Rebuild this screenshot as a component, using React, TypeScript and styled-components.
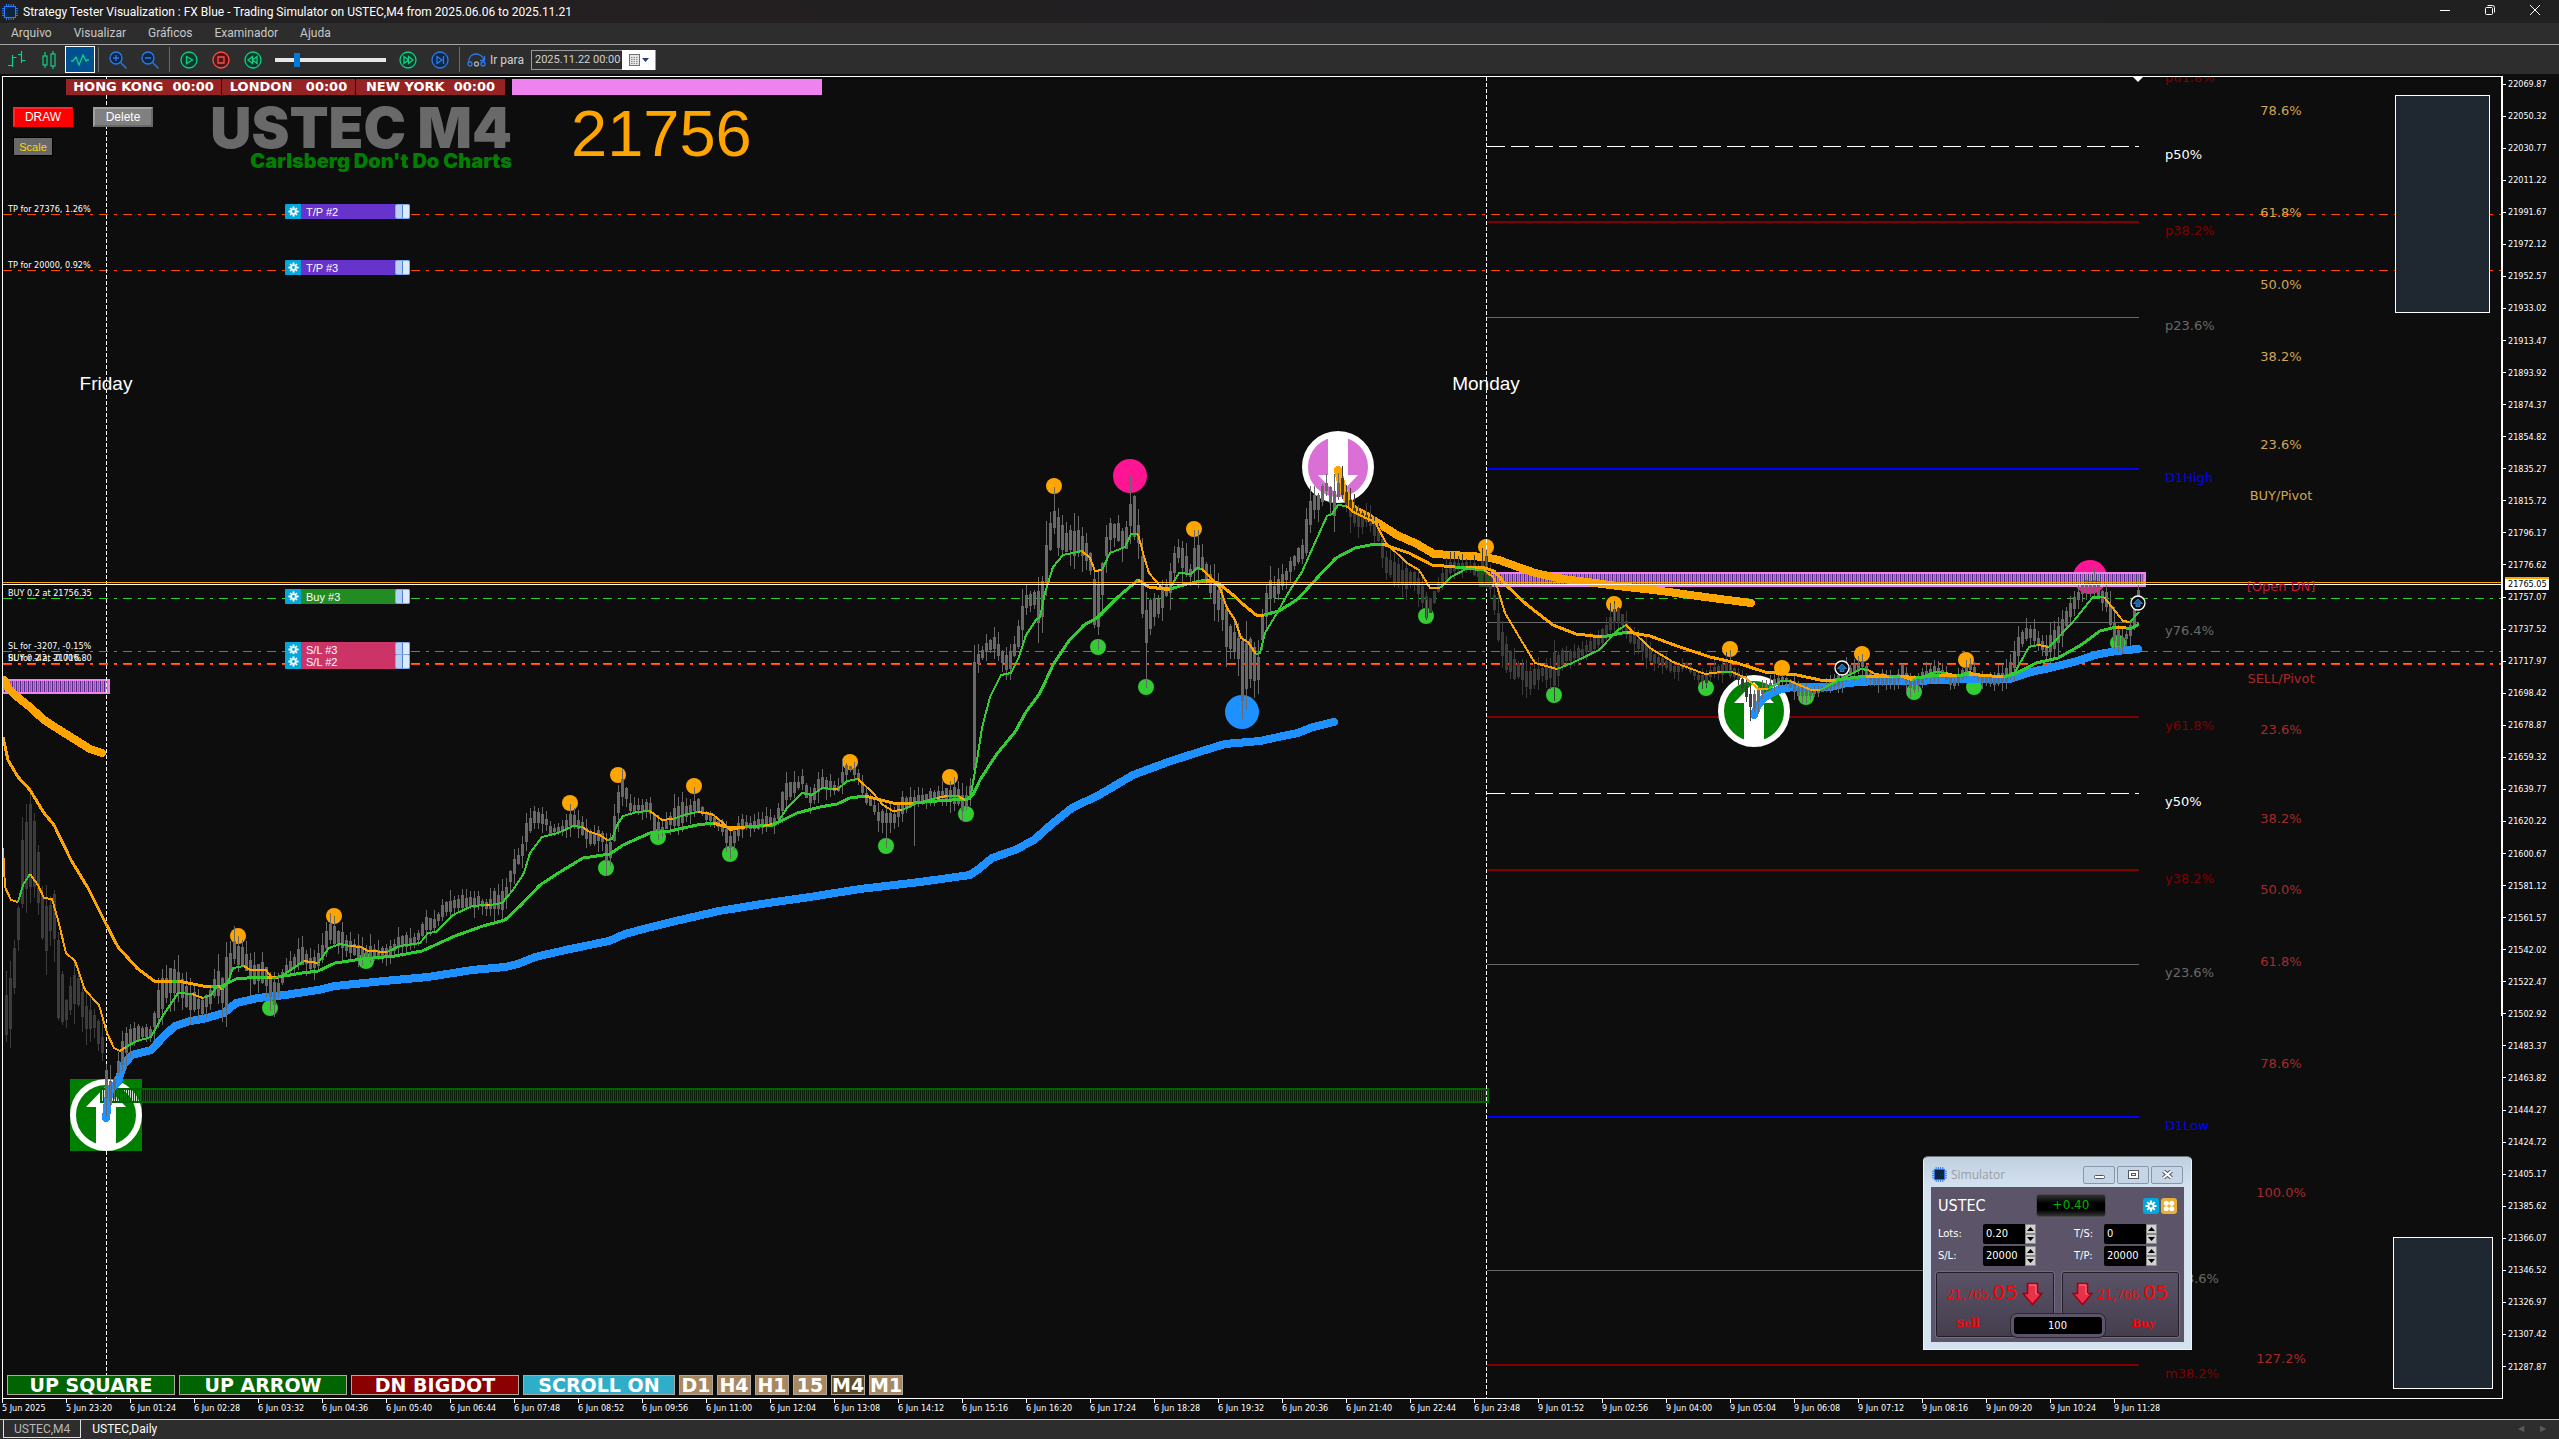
import React from "react";
import styled, { createGlobalStyle, css } from "styled-components";

const OX = 3;
const OY = 77;

const UI = `Roboto, "Open Sans", sans-serif`;
const CHART = `"DejaVu Sans Condensed", "DejaVu Sans", sans-serif`;
const WIDE = `"DejaVu Sans", sans-serif`;
const HEAVY = `Inter, "DejaVu Sans", sans-serif`;
const ARIAL = `"Liberation Sans", Arial, sans-serif`;

const GlobalStyle = createGlobalStyle`
  * { box-sizing: border-box; }
  html, body { margin: 0; background: #0d0d0d; }
  button, input { margin: 0; padding: 0; font: inherit; color: inherit; }
`;

const Shell = styled.div`
  display: flex;
  flex-direction: column;
  height: 100vh;
  overflow: hidden;
  font-family: ${UI};
  font-size: 12px;
  color: #fff;
  background: #0d0d0d;
`;

/* ---------- window frame ---------- */

const TitleBar = styled.header`
  display: flex;
  align-items: center;
  gap: 5px;
  height: 23px;
  padding: 0 12px 0 2px;
  background: linear-gradient(90deg, #202020, #241f20 20%, #201f22 60%, #202020);
`;

const Title = styled.h1`
  flex: 1;
  margin: 0;
  font-size: 12px;
  font-weight: 400;
  line-height: 20px;
`;

const WindowButtons = styled.div`
  display: flex;
  gap: 21px;
  padding-bottom: 3px;
`;

const WindowButton = styled.button`
  display: grid;
  place-items: center;
  width: 24px;
  height: 20px;
  border: 0;
  background: none;
`;

const MenuBar = styled.nav`
  display: flex;
  align-items: center;
  gap: 22px;
  height: 22px;
  padding: 0 11px 2px;
  background: #2d2d2d;
  border-bottom: 1px solid #a5a5a5;
`;

const MenuLink = styled.a`
  color: #c8c8c8;
  text-decoration: none;
  line-height: 16px;
`;

const Toolbar = styled.div`
  display: flex;
  align-items: center;
  height: 29px;
  padding-left: 1px;
  background: #2d2d2d;
`;

const ToolButton = styled.button<{ $active?: boolean }>`
  display: grid;
  place-items: center;
  width: ${(p) => (p.$active ? 30 : 32)}px;
  height: 27px;
  border: ${(p) => (p.$active ? "1px solid #fff" : "0")};
  background: ${(p) => (p.$active ? "#00508f" : "none")};
`;

const Divider = styled.span`
  width: 1px;
  height: 25px;
  margin: 0 3px;
  background: #6a6a6a;
`;

const Speed = styled.input`
  appearance: none;
  width: 111px;
  height: 14px;
  margin: 0 6px;
  background: linear-gradient(#e7e7e7, #e7e7e7) center / 100% 4px no-repeat;
  &::-webkit-slider-thumb {
    appearance: none;
    width: 6px;
    height: 14px;
    background: #0078d7;
  }
`;

const GoTo = styled.label`
  display: flex;
  align-items: center;
  gap: 4px;
  width: 64px;
  padding-left: 4px;
  color: #d0d0d0;
`;

const DateBox = styled.div`
  display: flex;
  align-items: center;
  height: 20px;
  margin-left: 4px;
  border: 1px solid #9a9a9a;
  background: #2d2d2d;
`;

const DateInput = styled.input`
  width: 90px;
  padding-left: 3px;
  border: 0;
  outline: 0;
  background: none;
  color: #d0d0d0;
  font-size: 11px;
`;

const DateButton = styled.button`
  display: flex;
  align-items: center;
  gap: 2px;
  width: 33px;
  height: 20px;
  padding-left: 7px;
  border: 0;
  background: #fff;
`;

/* ---------- chart frame ---------- */

const ChartArea = styled.main`
  flex: 1;
  min-height: 0;
  display: grid;
  grid-template-columns: 1fr 56px;
  grid-template-rows: 1fr 20px;
  padding: 2px 0 0 2px;
`;

const Plot = styled.section`
  position: relative;
  overflow: hidden;
  border: 1px solid #fff;
`;

const Drawing = styled.svg`
  position: absolute;
  inset: 0;
  width: 100%;
  height: 100%;
`;

const PriceAxis = styled.div`
  position: relative;
  display: flex;
  flex-direction: column;
  justify-content: space-between;
  padding: 1px 0 25px;
`;

const Price = styled.span`
  display: flex;
  align-items: center;
  height: 14px;
  font: 9px / 14px ${CHART};
  &::before {
    content: "";
    width: 3px;
    height: 1px;
    margin-right: 2px;
    background: #fff;
  }
`;

const CurrentPrice = styled.div`
  position: absolute;
  left: 2px;
  top: 501px;
  height: 13px;
  width: 44px;
  padding-left: 3px;
  font: 9px / 11px ${CHART};
  color: #000;
  background: #fff;
  border-top: 2px solid #ffa500;
`;

const TimeAxis = styled.div`
  display: flex;
  overflow: hidden;
`;

const Time = styled.span`
  flex: 0 0 64px;
  height: 20px;
  padding-top: 4px;
  font: 9px / 10px ${CHART};
  white-space: nowrap;
  background: linear-gradient(#fff, #fff) 0 0 / 1px 4px no-repeat;
`;

const TabBar = styled.footer`
  display: flex;
  align-items: flex-start;
  height: 20px;
  padding: 0 12px 0 3px;
  background: #2d2d2d;
  border-top: 1px solid #c8c8c8;
`;

const Tab = styled.button<{ $current?: boolean }>`
  height: 18px;
  padding: 0 10px;
  border: ${(p) => (p.$current ? "1px solid #e0e0e0" : "1px solid transparent")};
  border-top: 0;
  background: none;
  color: ${(p) => (p.$current ? "#b8b8b8" : "#fff")};
  font-size: 12px;
  line-height: 18px;
`;

const TabArrows = styled.div`
  display: flex;
  gap: 14px;
  margin: 3px 0 0 auto;
  color: #5a5a5a;
`;

const ArrowButton = styled.button`
  width: 8px;
  border: 0;
  background: none;
  font: 8px / 12px ${WIDE};
`;

/* ---------- chart objects, pinned to the canvas ---------- */

type At = { $x: number; $y: number };
const pinned = css<At>`
  position: absolute;
  left: ${(p) => p.$x - OX}px;
  top: ${(p) => p.$y - OY}px;
`;

const Group = styled.div<At & { $gap?: number }>`
  ${pinned}
  display: flex;
  gap: ${(p) => p.$gap ?? 0}px;
`;

const Clock = styled.span<{ $w: number }>`
  width: ${(p) => p.$w}px;
  height: 16px;
  background: #962323;
  font: bold 13px / 16px ${WIDE};
  text-align: center;
  white-space: pre;
`;

const NewsBar = styled.span`
  width: 310px;
  height: 16px;
  margin-left: 6px;
  background: #ee82ee;
`;

const ChartButton = styled.button<{ $tone: "red" | "gray" }>`
  width: 60px;
  height: 20px;
  border: 2px solid;
  border-color: ${(p) => (p.$tone === "red" ? "#ff2828 #f00 #f00 #ff2828" : "#a0a0a0 #696969 #696969 #a0a0a0")};
  background: ${(p) => (p.$tone === "red" ? "#ff0000" : "#808080")};
  font: 12px / 16px ${ARIAL};
`;

const ScaleButton = styled.button<At>`
  ${pinned}
  width: 40px;
  height: 19px;
  border: 1px solid #000;
  background: #696969;
  color: #ffd700;
  font: 11px / 18px ${ARIAL};
`;

const Heading = styled.div<At>`
  ${pinned}
  width: 310px;
  text-align: right;
  white-space: nowrap;
  font-family: ${HEAVY};
  font-weight: 900;
`;

const Symbol = styled.div`
  color: #696969;
  font-size: 57px;
  line-height: 46px;
`;

const Motto = styled.div`
  color: #008000;
  font-size: 20px;
  line-height: 20px;
`;

const BigPrice = styled.div<At>`
  ${pinned}
  color: #ffa500;
  font: 65px / 65px ${ARIAL};
`;

const Note = styled.span<At>`
  ${pinned}
  font: 9px / 10px ${CHART};
  white-space: nowrap;
`;

const DayName = styled.span<At>`
  ${pinned}
  width: 100px;
  text-align: center;
  font: 19px / 22px ${ARIAL};
`;

const Level = styled.span<At & { $c: string }>`
  ${pinned}
  color: ${(p) => p.$c};
  font: 13px / 17px ${WIDE};
`;

const Fibo = styled(Level)`
  width: 120px;
  text-align: center;
`;

const OrderTag = styled.div<At & { $c: string }>`
  ${pinned}
  display: flex;
  width: 125px;
  height: 15px;
  background: ${(p) => p.$c};
  font: 11px / 16px ${ARIAL};
`;

const OrderGear = styled.button`
  display: grid;
  place-items: center;
  width: 16px;
  border: 0;
  border-radius: 2px 0 0 2px;
  background: #00a8dc;
`;

const OrderName = styled.span`
  flex: 1;
  padding-left: 5px;
`;

const OrderGrip = styled.button`
  width: 15px;
  border: 1px solid #7fa8e8;
  border-radius: 2px;
  background: linear-gradient(90deg, #b8d0f4 6px, #4f82d0 6px, #4f82d0 7px, #dcebff 7px);
`;

const Panel = styled.div<At & { $w: number; $h: number }>`
  ${pinned}
  width: ${(p) => p.$w}px;
  height: ${(p) => p.$h}px;
  border: 1px solid #fff;
  background: #1f2830;
`;

const MarkButton = styled.button<{ $w: number; $c: string }>`
  width: ${(p) => p.$w}px;
  height: 20px;
  border: 1px solid #b0a8a0;
  background: ${(p) => p.$c};
  font: bold 19px / 18px ${WIDE};
  white-space: nowrap;
`;

/* ---------- simulator window ---------- */

const Sim = styled.div<At>`
  ${pinned}
  width: 269px;
  padding: 1px 7px 7px;
  border-radius: 5px 5px 0 0;
  background: linear-gradient(#c0cfde, #d4e2f0 30px);
  border: 1px solid #eef4fa;
  border-top-color: #6e7680;
  font-family: ${WIDE};
`;

const SimTitle = styled.div`
  display: flex;
  align-items: center;
  height: 29px;
  padding: 4px 1px 0 1px;
  gap: 2px;
`;

const SimName = styled.span`
  flex: 1;
  padding-left: 2px;
  color: #989ea6;
  font: 12px / 16px "Open Sans", ${UI};
`;

const SimControl = styled.button`
  display: grid;
  place-items: center;
  width: 32px;
  height: 18px;
  border: 1px solid #8796ac;
  border-radius: 2px;
  background: #c6d5e5;
`;

const SimBody = styled.div`
  height: 155px;
  padding: 7px 5px 3px;
  background: #5c556a;
`;

const SimHead = styled.div`
  display: flex;
  align-items: center;
  justify-content: space-between;
  height: 23px;
  padding: 0 2px;
`;

const SimSymbol = styled.span`
  width: 98px;
  font: 16px / 20px ${CHART};
`;

const Profit = styled.output`
  width: 70px;
  height: 23px;
  border: 1px solid #4a4a4a;
  border-radius: 3px;
  background: linear-gradient(#333, #000 40%, #000 70%, #333);
  color: #00b400;
  font: 12px / 20px ${WIDE};
  text-align: center;
`;

const SimIcons = styled.div`
  display: flex;
  flex: 1;
  justify-content: flex-end;
  gap: 2px;
`;

const SimIcon = styled.button<{ $c: string }>`
  display: grid;
  place-items: center;
  width: 16px;
  height: 16px;
  border: 0;
  border-radius: 3px;
  background: ${(p) => p.$c};
`;

const Fields = styled.div`
  display: grid;
  grid-template-columns: 98px 83px;
  column-gap: 38px;
  row-gap: 2px;
  padding: 7px 2px 6px;
`;

const Field = styled.label`
  display: flex;
  justify-content: space-between;
  align-items: center;
  height: 20px;
  font: 11px / 20px ${CHART};
`;

const Spin = styled.span`
  display: flex;
  width: 53px;
  height: 20px;
`;

const SpinInput = styled.input`
  width: 42px;
  padding-left: 3px;
  border: 0;
  border-radius: 2px 0 0 2px;
  background: #000;
  color: #fff;
`;

const SpinButtons = styled.span`
  display: grid;
  grid-template-rows: 1fr 1fr;
  width: 11px;
`;

const SpinButton = styled.button`
  display: grid;
  place-items: center;
  border: 1px solid #8a8a8a;
  background: #d0d0d0;
`;

const Deal = styled.div`
  position: relative;
  display: flex;
  justify-content: space-between;
  gap: 8px;
`;

const DealButton = styled.button`
  flex: 1;
  height: 65px;
  border: 1px solid #211e28;
  outline: 1px solid #716a80;
  border-radius: 2px;
  background: linear-gradient(#5a5367, #443e4e);
  color: #ff0000;
`;

const Quote = styled.span`
  display: flex;
  align-items: center;
  justify-content: center;
  gap: 4px;
  height: 38px;
`;

const Digits = styled.span`
  font: 12px / 24px "DejaVu Serif", serif;
`;

const Pips = styled.span`
  font: 20px / 24px ${WIDE};
`;

const DealName = styled.span<{ $end?: boolean }>`
  display: block;
  padding: ${(p) => (p.$end ? "0 0 0 46px" : "0 54px 0 0")};
  font: bold 11px / 22px "DejaVu Serif", serif;
`;

const Units = styled.input`
  position: absolute;
  left: 50%;
  bottom: 0;
  width: 94px;
  height: 23px;
  transform: translateX(-50%);
  border: 3px solid #5c556a;
  border-radius: 6px;
  outline: 1px solid #2a2632;
  background: #000;
  color: #fff;
  font: 11px / 16px ${CHART};
  text-align: center;
`;

/* ---------- icons ---------- */

const Chip = ({ size = 16 }: { size?: number }) => (
  <svg width={size} height={size} viewBox="0 0 16 16">
    <path d="M4.5 0v16M6.8 0v16M9.2 0v16M11.5 0v16M0 4.5h16M0 6.8h16M0 9.2h16M0 11.5h16" stroke="#2979ff" />
    <rect x="2.5" y="2.5" width="11" height="11" fill="#0a2540" stroke="#2979ff" />
  </svg>
);

const Gear = ({ size = 12 }: { size?: number }) => (
  <svg width={size} height={size} viewBox="0 0 12 12">
    <g stroke="#fff" strokeWidth="2.2">
      <path d="M6 .5v11M.5 6h11" />
      <path d="M2.2 2.2l7.600 7.600M9.800 2.200l-7.600 7.600" strokeWidth="1.800" />
    </g>
    <circle cx="6" cy="6" r="3.4" fill="#fff" />
    <circle cx="6" cy="6" r="1.6" fill="#00a8dc" />
  </svg>
);

const RoundIcon = ({ c, fill, d }: { c: string; fill: string; d: string }) => (
  <svg width="20" height="20" viewBox="0 0 20 20" fill="none" stroke={c} strokeWidth="1.3">
    <circle cx="10" cy="10" r="8" fill={fill} />
    <path d={d} />
  </svg>
);

const Magnifier = ({ plus }: { plus?: boolean }) => (
  <svg width="20" height="20" viewBox="0 0 20 20" fill="none" stroke="#2b7bea" strokeWidth="1.3">
    <circle cx="8" cy="8" r="6" fill="#0c2748" />
    <path d="M12.5 12.5l6 6M5 8h6" />
    {plus && <path d="M8 5v6" />}
  </svg>
);

const RedArrow = () => (
  <svg width="21" height="24" viewBox="0 0 21 24">
    <path d="M5.5 1.5h10v10h4.5l-9.500 11-9.500-11h4.500z" fill="#e8324a" stroke="#a00014" strokeWidth="1.6" />
    <path d="M7 3h7v9h2" fill="none" stroke="#ff7a88" />
  </svg>
);

const Tri = ({ up }: { up?: boolean }) => (
  <svg width="7" height="4" viewBox="0 0 7 4">
    <path d={up ? "M0 4h7L3.500 0z" : "M0 0h7L3.500 4z"} fill="#000" />
  </svg>
);

/* ---------- data ---------- */

const G = "#32cd32";
const O = "#ffa500";
const B = "#1e90ff";

const BLUE_1 =
  "106,1118 108,1100 110,1090 118,1082 123,1065 132,1055 151,1050 165,1035 175,1026 190,1021 203,1019 224,1013 236,1003 258,998 285,995 318,990 335,986 384,981 428,977 472,970 505,967 518,964 535,957 570,949 609,941 625,934 647,928 680,920 719,911 768,903 810,897 860,889 920,882 970,875 980,868 992,858 1015,850 1034,840 1053,823 1072,808 1099,795 1133,775 1168,762 1199,752 1225,744 1260,741 1283,736 1298,733 1313,727 1334,722";
const BLUE_2 =
  "1754,715 1758,705 1765,697 1778,690 1792,687 1831,687 1847,683 1875,681 1916,681 1962,679 2010,679 2031,672 2054,667 2077,661 2095,655 2116,651 2138,649";
const BAND_1 = "4,680 8,688 16,696 30,707 44,720 66,734 90,749 102,753";
const BAND_2 =
  "1338,470 1341,483 1346,497 1353,509 1365,515 1378,523 1397,535 1417,544 1434,554 1485,557 1499,560 1507,563 1535,573 1563,579 1618,586 1654,590 1705,597 1751,603";

const SLOW_MA =
  "O 3,737 8,760 18,777 30,790 44,813 54,825 71,860 88,888 104,920 118,947 137,968 154,981 172,981 G 178,981 O 203,986 211,986 G 222,986 236,979 258,977 267,977 O 278,977 G 302,973 318,971 335,963 362,959 395,956 422,951 455,936 483,926 505,920 521,905 540,885 560,872 583,858 610,854 623,845 650,833 670,831 697,825 713,823 O 727,827 745,827 G 773,825 797,813 820,807 837,804 850,798 865,796 O 893,803 913,803 G 937,801 967,799 973,795 980,780 996,755 1015,732 1026,712 1040,693 1053,665 1068,642 1084,625 1097,618 1118,597 1138,580 O 1149,587 1164,589 1170,589 G 1187,584 1206,580 O 1218,583 1233,595 1244,605 1256,615 1264,615 G 1279,611 1298,599 1317,578 1336,558 1355,548 1370,545 1382,544 O 1409,553 1432,565 1455,567 G 1466,567 O 1485,568 1494,571 1508,587 1526,604 1553,625 1576,634 1602,637 G 1627,632 O 1650,636 1677,646 1710,657 1737,663 1765,672 1797,675 1820,680 1836,680 G 1866,676 O 1893,677 G 1902,676 O 1916,678 G 1939,675 O 1956,676 G 1969,674 O 2003,677 G 2015,674 2036,663 2058,658 2081,645 2100,631 2116,627 O 2126,628 G 2132,628 2139,624";

const FAST_MA =
  "O 3,848 5,887 11,900 18,902 G 23,885 30,874 O 38,885 44,898 52,899 58,920 66,953 75,961 85,990 99,1005 107,1033 114,1048 120,1051 126,1047 G 137,1041 151,1037 162,1017 178,993 192,994 O 203,998 G 211,995 218,985 O 222,990 G 228,982 233,968 244,966 O 250,970 266,970 272,978 G 280,977 304,961 O 318,963 G 329,948 340,944 350,946 O 361,947 368,951 387,952 G 400,946 420,943 428,933 436,932 453,915 472,906 486,905 O 490,905 G 502,903 513,890 524,873 530,853 542,837 558,833 573,826 582,827 O 590,832 600,835 607,840 G 612,839 617,825 623,816 637,812 650,811 O 662,820 673,819 G 687,814 698,812 O 712,814 722,822 730,830 745,827 G 763,826 O 772,824 G 778,822 787,808 802,793 812,795 822,788 833,789 O 838,789 G 847,781 858,779 O 873,793 883,805 893,811 902,810 G 917,803 937,798 O 947,796 G 958,796 O 965,800 G 970,799 977,760 982,728 990,697 1001,675 1011,673 1019,657 1026,635 1036,620 1040,617 1045,593 1053,567 1063,555 1082,551 O 1090,558 1095,571 1102,570 G 1110,553 1125,547 1131,534 1138,534 O 1143,553 1149,573 1162,588 1170,588 G 1179,573 1191,574 1197,568 1202,569 O 1210,577 1220,588 1227,608 1235,620 1241,638 1248,642 1256,654 G 1260,653 1265,633 1277,613 1290,590 1302,572 1313,547 1327,516 1332,514 1338,505 1346,506 O 1355,513 1375,522 1386,543 1407,563 1419,570 1430,588 1440,588 G 1451,577 1466,569 1484,570 O 1493,577 1496,583 1505,613 1521,640 1535,663 1557,669 G 1572,663 1599,650 1618,630 1626,625 O 1650,648 1673,662 1705,674 1721,672 G 1732,672 O 1746,678 1758,689 1768,689 G 1781,681 1790,681 O 1811,690 1820,690 G 1843,678 1861,669 1868,670 O 1875,674 1889,676 G 1900,676 O 1912,680 G 1935,672 1946,673 O 1957,676 G 1969,672 O 1980,676 2003,677 G 2015,672 2029,647 2038,645 O 2049,647 G 2072,623 2093,597 2104,597 O 2123,621 2130,622 G 2139,612";

/* x, highest body price, lowest body price along the session */
const RANGE =
  "3,1010,1050 11,945,1045 18,900,945 23,800,900 35,800,890 40,870,920 44,905,960 50,895,940 56,890,950 58,930,1040 66,995,1020 75,965,1005 85,1000,1033 95,1010,1035 103,1035,1062 107,1082,1115 115,1075,1085 122,1035,1065 128,1030,1050 137,1025,1040 151,1025,1040 160,975,1015 170,967,1000 180,970,995 187,985,1010 203,1000,1015 215,970,1000 222,970,1005 226,950,1010 233,935,960 242,940,970 252,960,985 265,960,985 270,970,1005 275,985,1005 285,965,975 300,945,965 312,955,970 320,950,968 328,920,945 335,925,945 345,935,950 360,945,960 370,945,962 385,948,960 400,935,950 415,935,945 425,915,935 433,920,930 445,898,915 460,895,908 475,895,908 487,900,910 494,888,912 501,893,912 507,880,900 511,862,882 519,853,862 523,833,860 527,818,838 535,810,822 545,815,825 550,825,835 562,825,832 573,810,828 585,825,838 593,830,848 602,830,842 606,840,865 610,840,862 614,808,845 619,778,812 623,778,795 630,800,812 640,805,812 650,800,815 655,810,838 660,828,835 670,812,828 680,800,825 690,803,815 697,795,812 705,810,820 715,815,825 722,820,835 727,830,850 732,835,848 740,818,832 752,820,830 765,815,828 775,818,828 780,795,820 786,780,800 795,780,795 802,775,785 808,790,805 815,785,800 820,775,790 830,780,792 838,785,793 843,765,785 850,765,770 858,770,782 865,790,805 872,800,810 878,808,825 886,812,825 894,810,825 902,795,815 912,795,805 925,792,802 940,788,798 950,785,805 958,785,805 964,795,815 970,785,800 974,655,790 978,650,665 985,643,655 993,635,650 1000,645,665 1008,650,675 1015,640,655 1019,610,645 1026,590,610 1034,585,610 1040,590,630 1044,550,610 1050,510,560 1054,505,530 1060,520,560 1068,525,555 1080,530,560 1088,545,570 1092,560,580 1095,560,650 1100,560,640 1104,540,570 1110,520,545 1117,520,540 1125,530,560 1131,485,530 1135,485,540 1139,530,545 1143,530,660 1146,600,650 1150,590,630 1158,590,620 1166,580,600 1172,560,590 1177,540,560 1183,545,575 1190,565,580 1196,535,570 1203,555,575 1212,575,605 1220,590,615 1226,600,655 1232,630,655 1238,630,660 1242,640,705 1246,640,690 1252,635,680 1258,650,685 1262,605,650 1268,580,605 1275,580,600 1285,570,585 1293,555,570 1303,540,560 1308,500,550 1312,495,515 1318,490,510 1326,480,495 1334,490,520 1338,480,500 1342,478,500 1348,495,520 1358,510,530 1368,510,525 1378,525,545 1386,550,575 1394,560,585 1405,565,590 1415,570,585 1425,590,620 1432,595,612 1440,575,590 1450,560,575 1465,560,570 1480,565,578 1485,550,580 1492,580,600 1498,610,640 1505,640,670 1515,655,680 1530,670,690 1540,665,680 1550,660,680 1554,650,692 1562,650,665 1572,650,662 1585,645,655 1595,635,650 1605,625,645 1612,610,630 1620,605,620 1628,625,640 1640,635,655 1655,655,665 1665,658,668 1675,665,675 1685,660,668 1695,672,678 1705,675,685 1712,668,675 1728,660,675 1738,672,682 1746,680,700 1753,695,715 1757,690,705 1762,685,695 1770,680,690 1785,675,682 1795,685,695 1805,688,698 1815,690,695 1825,685,692 1840,670,685 1850,665,675 1862,658,670 1872,675,685 1885,672,685 1895,678,685 1902,662,680 1912,680,692 1920,672,685 1935,665,675 1945,670,680 1953,680,688 1962,670,680 1970,662,670 1980,674,682 1992,675,685 2005,670,685 2012,655,675 2017,635,660 2025,628,640 2033,625,640 2040,640,650 2047,640,660 2055,625,650 2063,615,635 2072,600,615 2080,585,600 2087,578,590 2097,578,600 2103,590,605 2108,590,615 2113,615,640 2120,635,650 2127,630,640 2132,620,640 2136,590,625 2139,580,600";

type Bar = { x: number; top: number; bottom: number; high: number; low: number; dim: boolean };

const noise = (n: number) => {
  const v = Math.sin(n * 127.1 + 11.7) * 43758.5453;
  return v - Math.floor(v);
};

const buildBars = (): Bar[] => {
  const keys = RANGE.split(" ").map((k) => k.split(",").map(Number));
  const bars: Bar[] = [];
  let k = 0;
  for (let x = 6; x <= 2138; x += 4) {
    while (k < keys.length - 2 && keys[k + 1][0] < x) k += 1;
    const [x0, t0, b0] = keys[k];
    const [x1, t1, b1] = keys[k + 1];
    const f = Math.min(1, Math.max(0, (x - x0) / (x1 - x0)));
    const top = t0 + (t1 - t0) * f;
    const bottom = b0 + (b1 - b0) * f;
    const h = bottom - top;
    const bodyTop = Math.round(top + noise(x) * h * 0.3);
    const bodyBottom = Math.max(bodyTop + 3, Math.round(bottom - noise(x + 1) * h * 0.25));
    const reach = 4 + Math.min(h, 40) * 0.5;
    bars.push({
      x,
      top: bodyTop,
      bottom: bodyBottom,
      high: Math.round(bodyTop - noise(x + 2) * reach),
      low: Math.round(bodyBottom + noise(x + 3) * reach),
      dim: x < 106 || (x > 1338 && x < 1754),
    });
  }
  return bars;
};

const BARS = buildBars();

const splitRuns = (path: string) => {
  const runs: { color: string; points: string[] }[] = [];
  let last = "";
  path.split(" ").forEach((token) => {
    if (token === "G" || token === "O") {
      runs.push({ color: token === "G" ? G : O, points: last ? [last] : [] });
    } else {
      runs[runs.length - 1].points.push(token);
      last = token;
    }
  });
  return runs;
};

const HIGHS = [
  [238, 936], [334, 916], [570, 803], [618, 775], [694, 786], [850, 762], [950, 777], [1054, 486],
  [1194, 529], [1486, 547], [1614, 604], [1730, 649], [1782, 668], [1862, 654], [1966, 660],
];
const LOWS = [
  [270, 1008], [366, 961], [606, 868], [658, 837], [730, 854], [886, 846], [966, 814], [1098, 647],
  [1146, 687], [1426, 616], [1554, 695], [1706, 688], [1806, 697], [1914, 692], [1974, 687], [2118, 643],
];
const SPIKES = [
  [570, 804, 825], [694, 787, 810], [914, 790, 846], [886, 825, 848], [606, 860, 870], [658, 835, 840], [1146, 640, 688],
  [1098, 640, 650], [1130, 476, 490], [1194, 530, 560], [1054, 487, 510], [1242, 690, 714], [1426, 600, 618],
  [1486, 550, 575], [1614, 604, 620], [1730, 650, 670], [270, 990, 1010], [238, 936, 950], [334, 916, 930], [2138, 575, 590],
];

const RED = "#800000";
const GRAY = "#696969";
const LEVELS: { name: string; y: number; c: string; dash?: boolean; w?: number }[] = [
  { name: "p61.8%", y: 69, c: RED, w: 2 },
  { name: "p50%", y: 146, c: "#ffffff", dash: true },
  { name: "p38.2%", y: 222, c: RED, w: 2 },
  { name: "p23.6%", y: 317, c: GRAY },
  { name: "D1High", y: 469, c: "#0000ff", w: 2 },
  { name: "y76.4%", y: 622, c: GRAY },
  { name: "y61.8%", y: 717, c: RED, w: 2 },
  { name: "y50%", y: 793, c: "#ffffff", dash: true },
  { name: "y38.2%", y: 870, c: RED, w: 2 },
  { name: "y23.6%", y: 964, c: GRAY },
  { name: "D1Low", y: 1117, c: "#0000ff", w: 2 },
  { name: "m23.6%", y: 1270, c: GRAY },
  { name: "m38.2%", y: 1365, c: RED, w: 2 },
];

const GOLD = "#d2a550";
const BRICK = "#a52a2a";
const FIBOS: [string, number, string][] = [
  ["78.6%", 110, GOLD], ["61.8%", 212, GOLD], ["50.0%", 284, GOLD], ["38.2%", 356, GOLD], ["23.6%", 444, GOLD],
  ["BUY/Pivot", 495, GOLD], ["[Open DN]", 586, "#c8143c"], ["SELL/Pivot", 678, BRICK], ["23.6%", 729, BRICK],
  ["38.2%", 818, BRICK], ["50.0%", 889, BRICK], ["61.8%", 961, BRICK], ["78.6%", 1063, BRICK],
  ["100.0%", 1192, BRICK], ["127.2%", 1358, BRICK],
];

const ORDER_LINES: [number, string][] = [
  [214, "#ff4500"], [270, "#ff4500"], [598, G], [651, "#ff4500"], [663, G], [664, "#ff4500"],
];
const NOTES: [string, number][] = [
  ["TP for 27376, 1.26%", 209], ["TP for 20000, 0.92%", 265], ["BUY 0.2 at 21756.35", 593],
  ["SL for -3207, -0.15%", 646], ["BUY 0.2 at 21716.80", 658], ["SL for -42, -0.00%", 658],
];
const TAGS: [string, number, string][] = [
  ["T/P #2", 204, "#6633cc"], ["T/P #3", 260, "#6633cc"], ["Buy #3", 589, "#228b22"],
  ["S/L #3", 642, "#cc3366"], ["S/L #2", 654, "#cc3366"],
];

const PRICES = Array.from({ length: 41 }, (_, i) => (22069.87 - i * 19.55).toFixed(2));

const TIMES = [
  "5 Jun 2025", "5 Jun 23:20", "6 Jun 01:24", "6 Jun 02:28", "6 Jun 03:32", "6 Jun 04:36", "6 Jun 05:40",
  "6 Jun 06:44", "6 Jun 07:48", "6 Jun 08:52", "6 Jun 09:56", "6 Jun 11:00", "6 Jun 12:04", "6 Jun 13:08",
  "6 Jun 14:12", "6 Jun 15:16", "6 Jun 16:20", "6 Jun 17:24", "6 Jun 18:28", "6 Jun 19:32", "6 Jun 20:36",
  "6 Jun 21:40", "6 Jun 22:44", "6 Jun 23:48", "9 Jun 01:52", "9 Jun 02:56", "9 Jun 04:00", "9 Jun 05:04",
  "9 Jun 06:08", "9 Jun 07:12", "9 Jun 08:16", "9 Jun 09:20", "9 Jun 10:24", "9 Jun 11:28",
];

/* ---------- drawing parts ---------- */

const Signal = ({ x, y, c, down, square }: { x: number; y: number; c: string; down?: boolean; square?: boolean }) => (
  <g transform={`translate(${x} ${y})${down ? " scale(1 -1)" : ""}`}>
    {square && <rect x="-36" y="-36" width="72" height="72" fill={c} />}
    <circle r="33" fill={c} stroke="#fff" strokeWidth="6" />
    <path d="M-10 32V-8H-20L0-29L20-8H10V32z" fill="#fff" />
  </g>
);

const Average = ({ path, width }: { path: string; width: number }) => (
  <g fill="none" strokeWidth={width} strokeLinejoin="round">
    {splitRuns(path).map((r, i) => (
      <polyline key={i} points={r.points.join(" ")} stroke={r.color} />
    ))}
  </g>
);

const Ribbon = ({ points, c }: { points: string; c: string }) => (
  <polyline points={points} stroke={c} strokeWidth="8" fill="none" strokeLinejoin="round" strokeLinecap="round" />
);

const Zone = ({ x, y, w, c, fill }: { x: number; y: number; w: number; c: string; fill: string }) => (
  <rect x={x + 1} y={y + 1} width={w - 2} height="13" fill={`url(#${fill})`} stroke={c} strokeWidth="2" />
);

const TradeMark = ({ x, y }: { x: number; y: number }) => (
  <g transform={`translate(${x} ${y})`}>
    <circle r="7" fill="#0d0d0d" stroke="#fff" strokeWidth="1.300" />
    <path d="M0-4l4.500 4.500H2v3h-4v-3H-4.500z" fill="#1464b4" stroke="#5a9fdc" strokeWidth="0.600" />
  </g>
);

const ChartDrawing = () => (
  <Drawing aria-hidden="true">
    <defs>
      <pattern id="violetStripes" width="4" height="15" patternUnits="userSpaceOnUse">
        <rect width="4" height="15" fill="#ee82ee" fillOpacity="0.85" />
        <rect width="1" height="15" fill="#4a2c90" />
        <rect x="2" width="1" height="15" fill="#a050a8" />
      </pattern>
      <pattern id="greenStripes" width="4" height="15" patternUnits="userSpaceOnUse">
        <rect x="1" width="1" height="15" fill="#006400" />
        <rect x="3" width="1" height="15" fill="#005000" />
        <rect width="4" height="15" fill="#006400" fillOpacity="0.2" />
      </pattern>
    </defs>
    <g transform={`translate(${-OX} ${-OY})`}>
      <g shapeRendering="crispEdges">
        {LEVELS.map((l) => (
          <line
            key={l.name}
            x1="1487"
            x2="2139"
            y1={l.w ? l.y : l.y + 0.5}
            y2={l.w ? l.y : l.y + 0.5}
            stroke={l.c}
            strokeWidth={l.w ?? 1}
            strokeDasharray={l.dash ? "18 6" : undefined}
          />
        ))}
        {ORDER_LINES.map(([y, c]) => (
          <line key={y} x1="3" x2="110%" y1={y + 0.5} y2={y + 0.5} stroke={c} strokeDasharray="9 6 3 6" />
        ))}
      </g>

      <Signal x={106} y={1115} c="#008000" square />
      <Signal x={1338} y={467} c="#da70d6" down />
      <Signal x={1754} y={711} c="#008000" />
      {HIGHS.map(([x, y]) => <circle key={x} cx={x} cy={y} r="8" fill={O} />)}
      {LOWS.map(([x, y]) => <circle key={x} cx={x} cy={y} r="8" fill={G} />)}
      <circle cx="1130" cy="476" r="17" fill="#ff1493" />
      <circle cx="2090" cy="577" r="17" fill="#ff1493" />
      <circle cx="1242" cy="712" r="17" fill={B} />

      <g shapeRendering="crispEdges">
        <Zone x={-2} y={679} w={112} c="#ee82ee" fill="violetStripes" />
        <Zone x={1487} y={572} w={659} c="#ee82ee" fill="violetStripes" />
        <Zone x={1479} y={572} w={10} c="#006400" fill="greenStripes" />
        <Zone x={100} y={1088} w={1389} c="#006400" fill="greenStripes" />
        <line x1="106.5" x2="106.5" y1="77" y2="1398" stroke="#fff" strokeDasharray="4 2" />
        <line x1="1486.5" x2="1486.5" y1="77" y2="1398" stroke="#fff" strokeDasharray="4 2" />
        <Ribbon points={BLUE_1} c={B} />
        <Ribbon points={BLUE_2} c={B} />
        <Ribbon points={BAND_1} c={O} />
        <Ribbon points={BAND_2} c={O} />
        {BARS.map((b) => (
          <g key={b.x} fill={b.dim ? "#3c3c3c" : GRAY}>
            <rect x={b.x} y={b.high} width="1" height={b.low - b.high} />
            <rect x={b.x - 1} y={b.top} width="3" height={b.bottom - b.top} />
          </g>
        ))}
        {SPIKES.map(([x, a, b]) => <rect key={x} x={x} y={a} width="1" height={b - a} fill={GRAY} />)}
        <Average path={SLOW_MA} width={3} />
        <Average path={FAST_MA} width={2} />
        <rect x="3" y="582" width="100%" height="1" fill={O} />
        <rect x="3" y="584" width="100%" height="1" fill="#fff" />
      </g>
      <TradeMark x={1842} y={668} />
      <TradeMark x={2138} y={603} />
      <path d="M2133 77h10l-5 5z" fill="#fff" />
      <rect x="2501" y="77" width="2" height="939" fill="#fff" />
    </g>
  </Drawing>
);

const SpinField = ({ label, value }: { label: string; value: string }) => (
  <Field>
    {label}
    <Spin>
      <SpinInput defaultValue={value} />
      <SpinButtons>
        <SpinButton type="button" aria-label={`${label} up`}><Tri up /></SpinButton>
        <SpinButton type="button" aria-label={`${label} down`}><Tri /></SpinButton>
      </SpinButtons>
    </Spin>
  </Field>
);

const Simulator = () => (
  <Sim $x={1923} $y={1156}>
    <SimTitle>
      <Chip size={15} />
      <SimName>Simulator</SimName>
      <SimControl aria-label="Minimize simulator">
        <svg width="11" height="10"><rect x="0.5" y="5.500" width="10" height="3" rx="1" fill="#fff" stroke="#505868" /></svg>
      </SimControl>
      <SimControl aria-label="Maximize simulator">
        <svg width="11" height="9"><rect x="0.5" y="0.500" width="10" height="8" fill="#fff" stroke="#505868" /><rect x="3.500" y="3.500" width="4" height="2" fill="none" stroke="#505868" /></svg>
      </SimControl>
      <SimControl aria-label="Close simulator">
        <svg width="13" height="9"><path d="M2.500 1l8 7M10.500 1l-8 7" stroke="#505868" strokeWidth="4" /><path d="M2.500 1l8 7M10.500 1l-8 7" stroke="#fff" strokeWidth="2" /></svg>
      </SimControl>
    </SimTitle>
    <SimBody>
      <SimHead>
        <SimSymbol>USTEC</SimSymbol>
        <Profit>+0.40</Profit>
        <SimIcons>
          <SimIcon $c="#00a8dc" aria-label="Settings"><Gear /></SimIcon>
          <SimIcon $c="#e8b030" aria-label="Layout">
            <svg width="12" height="12" fill="#fff"><circle cx="3.300" cy="3.300" r="2.500" /><circle cx="8.700" cy="3.300" r="2.500" /><circle cx="3.300" cy="8.700" r="2.500" /><circle cx="8.700" cy="8.700" r="2.500" /></svg>
          </SimIcon>
        </SimIcons>
      </SimHead>
      <Fields>
        <SpinField label="Lots:" value="0.20" />
        <SpinField label="T/S:" value="0" />
        <SpinField label="S/L:" value="20000" />
        <SpinField label="T/P:" value="20000" />
      </Fields>
      <Deal>
        <DealButton>
          <Quote>
            <span><Digits>21,765.</Digits><Pips>05</Pips></span>
            <RedArrow />
          </Quote>
          <DealName>Sell</DealName>
        </DealButton>
        <DealButton>
          <Quote>
            <RedArrow />
            <span><Digits>21,766.</Digits><Pips>05</Pips></span>
          </Quote>
          <DealName $end>Buy</DealName>
        </DealButton>
        <Units aria-label="Units" defaultValue="100" />
      </Deal>
    </SimBody>
  </Sim>
);

const TG = "#0fd084";

export default function App() {
  return (
    <Shell>
      <GlobalStyle />
      <TitleBar>
        <Chip />
        <Title>Strategy Tester Visualization : FX Blue - Trading Simulator on USTEC,M4 from 2025.06.06 to 2025.11.21</Title>
        <WindowButtons>
          <WindowButton aria-label="Minimize"><svg width="10" height="10"><path d="M0 5.500h10" stroke="#fff" /></svg></WindowButton>
          <WindowButton aria-label="Restore">
            <svg width="10" height="10" fill="none" stroke="#fff"><rect x="0.500" y="2.500" width="7" height="7" rx="1" /><path d="M2.500 .5h5a2 2 0 0 1 2 2v5" /></svg>
          </WindowButton>
          <WindowButton aria-label="Close"><svg width="10" height="10"><path d="M0 0l10 10M10 0L0 10" stroke="#fff" /></svg></WindowButton>
        </WindowButtons>
      </TitleBar>
      <MenuBar>
        {["Arquivo", "Visualizar", "Gráficos", "Examinador", "Ajuda"].map((m) => <MenuLink key={m} href="#">{m}</MenuLink>)}
      </MenuBar>
      <Toolbar>
        <ToolButton aria-label="Bars">
          <svg width="18" height="18" fill="none" stroke={TG} strokeWidth="1.200"><path d="M4.500 4v12M0 14.500h4.500M4.500 6.500h4M13.500 0v12M10 3.500h3.500M13.500 9.500h4" /></svg>
        </ToolButton>
        <ToolButton aria-label="Candles">
          <svg width="14" height="18" fill="none" stroke={TG} strokeWidth="1.200"><rect x="1" y="5" width="4" height="9" /><rect x="9" y="3" width="4" height="12" /><path d="M3 1v4M3 14v3M11 0v3M11 15v3" /></svg>
        </ToolButton>
        <ToolButton $active aria-label="Line">
          <svg width="18" height="12" fill="none" stroke={TG} strokeWidth="1.300"><path d="M0 7h2l3-4 3 8 4-10 3 6 1-1h2" /></svg>
        </ToolButton>
        <Divider />
        <ToolButton aria-label="Zoom in"><Magnifier plus /></ToolButton>
        <ToolButton aria-label="Zoom out"><Magnifier /></ToolButton>
        <Divider />
        <ToolButton aria-label="Play"><RoundIcon c={TG} fill="#12382c" d="M7.500 6.500l6 3.500-6 3.500z" /></ToolButton>
        <ToolButton aria-label="Stop"><RoundIcon c="#ff4d4d" fill="#4a1616" d="M7 7h6v6H7z" /></ToolButton>
        <ToolButton aria-label="Slower"><RoundIcon c={TG} fill="#12382c" d="M9.500 6.500L5 10l4.500 3.500zM14 6.500L9.500 10l4.500 3.500z" /></ToolButton>
        <Speed type="range" min={0} max={100} defaultValue={18} aria-label="Speed" />
        <ToolButton aria-label="Faster"><RoundIcon c={TG} fill="#12382c" d="M6 6.500l4.500 3.500L6 13.500zM10.500 6.500L15 10l-4.500 3.500z" /></ToolButton>
        <ToolButton aria-label="Next"><RoundIcon c="#2b7bea" fill="#0c2748" d="M7 6.500l5 3.500-5 3.500zM13.500 6v8" /></ToolButton>
        <Divider />
        <GoTo htmlFor="goto">
          <svg width="19" height="14" fill="none" strokeWidth="1.300">
            <path d="M1.500 9C2 3 6 1 9 1s7 2 8 6M17.500 3v4.500H13" stroke="#2b7bea" />
            <circle cx="3" cy="11" r="2" stroke="#2b7bea" />
            <circle cx="9.500" cy="11" r="2" stroke="#aaa" />
            <circle cx="16" cy="11" r="2" stroke="#2b7bea" />
          </svg>
          Ir para
        </GoTo>
        <DateBox>
          <DateInput id="goto" defaultValue="2025.11.22 00:00" />
          <DateButton aria-label="Calendar">
            <svg width="11" height="12"><rect x="0.500" y="0.500" width="10" height="11" fill="#e6e6e6" stroke="#707070" /><path d="M2 3.500h7M2 5.500h7M2 7.500h7M2 9.500h7" stroke="#8a8a8a" strokeDasharray="1.500 1" /></svg>
            <svg width="7" height="4"><path d="M0 0h7L3.500 4z" fill="#243c78" /></svg>
          </DateButton>
        </DateBox>
      </Toolbar>

      <ChartArea>
        <Plot>
          <ChartDrawing />
          {LEVELS.map((l) => <Level key={l.name} $x={2165} $y={l.y} $c={l.c}>{l.name}</Level>)}
          {FIBOS.map(([t, y, c]) => <Fibo key={y} $x={2221} $y={y - 8} $c={c}>{t}</Fibo>)}
          {NOTES.map(([t, y]) => <Note key={t} $x={8} $y={y - 5}>{t}</Note>)}
          {TAGS.map(([t, y, c]) => (
            <OrderTag key={t} $x={285} $y={y} $c={c}>
              <OrderGear aria-label={`${t} settings`}><Gear size={11} /></OrderGear>
              <OrderName>{t}</OrderName>
              <OrderGrip aria-label={`Drag ${t}`} />
            </OrderTag>
          ))}
          <DayName $x={56} $y={373}>Friday</DayName>
          <DayName $x={1436} $y={373}>Monday</DayName>
          <Group $x={66} $y={79} $gap={1}>
            <Clock $w={155}>HONG KONG  00:00</Clock>
            <Clock $w={133}>LONDON   00:00</Clock>
            <Clock $w={149}>NEW YORK  00:00</Clock>
            <NewsBar />
          </Group>
          <Group $x={13} $y={107} $gap={20}>
            <ChartButton $tone="red">DRAW</ChartButton>
            <ChartButton $tone="gray">Delete</ChartButton>
          </Group>
          <ScaleButton $x={13} $y={137}>Scale</ScaleButton>
          <Heading $x={202} $y={105}>
            <Symbol>USTEC M4</Symbol>
            <Motto>Carlsberg Don't Do Charts</Motto>
          </Heading>
          <BigPrice $x={571} $y={101}>21756</BigPrice>
          <Panel $x={2395} $y={95} $w={95} $h={218} />
          <Panel $x={2393} $y={1237} $w={100} $h={152} />
          <Group $x={7} $y={1375} $gap={4}>
            <MarkButton $w={168} $c="#006400">UP SQUARE</MarkButton>
            <MarkButton $w={168} $c="#006400">UP ARROW</MarkButton>
            <MarkButton $w={168} $c="#8b0000">DN BIGDOT</MarkButton>
            <MarkButton $w={152} $c="#2eaec8">SCROLL ON</MarkButton>
            {["D1", "H4", "H1", "15", "M4", "M1"].map((t) => (
              <MarkButton key={t} $w={34} $c={t === "M4" ? "#5e4a28" : "#a88860"}>{t}</MarkButton>
            ))}
          </Group>
          <Simulator />
        </Plot>
        <PriceAxis>
          {PRICES.map((p) => <Price key={p}>{p}</Price>)}
          <CurrentPrice>21765.05</CurrentPrice>
        </PriceAxis>
        <TimeAxis>
          {TIMES.map((t) => <Time key={t}>{t}</Time>)}
        </TimeAxis>
      </ChartArea>

      <TabBar>
        <Tab $current>USTEC,M4</Tab>
        <Tab>USTEC,Daily</Tab>
        <TabArrows>
          <ArrowButton aria-label="Previous tab">◀</ArrowButton>
          <ArrowButton aria-label="Next tab">▶</ArrowButton>
        </TabArrows>
      </TabBar>
    </Shell>
  );
}
